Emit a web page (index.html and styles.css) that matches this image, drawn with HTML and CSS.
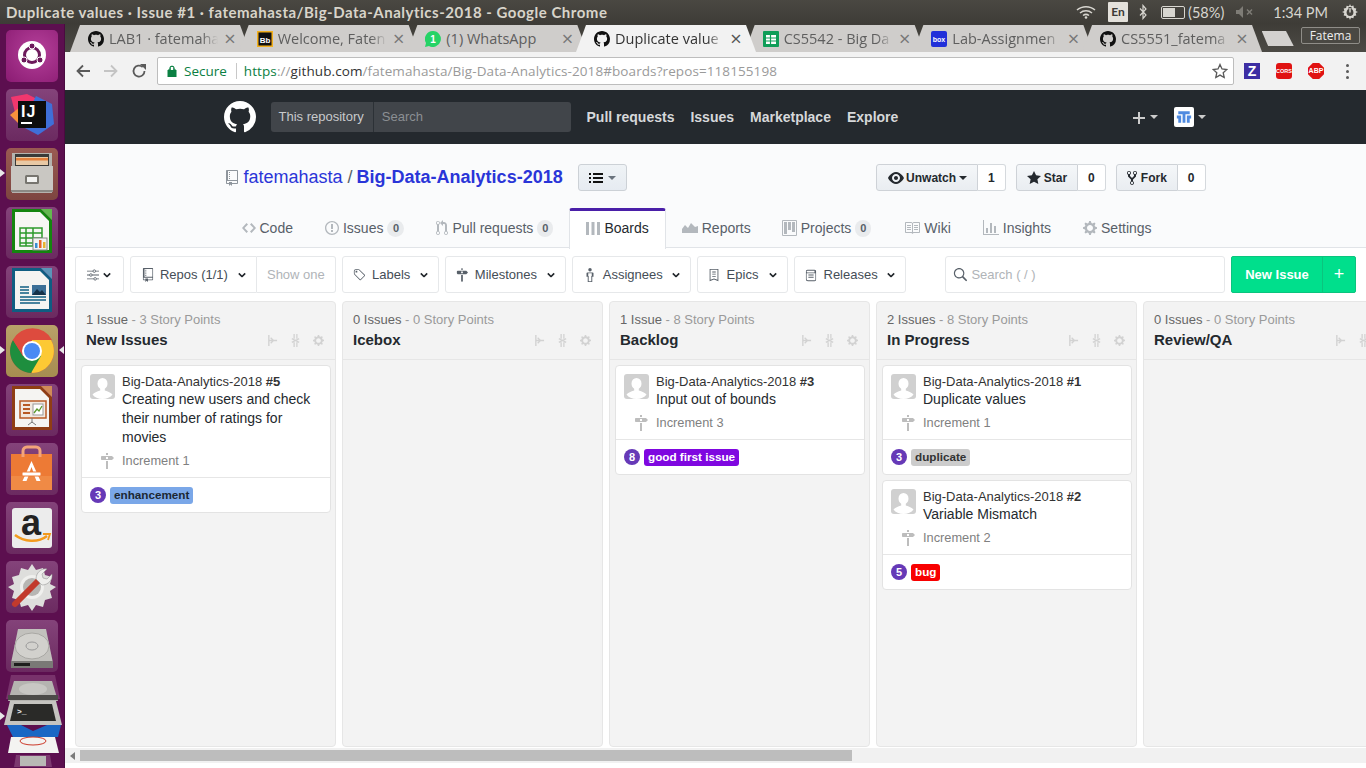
FILE: index.html
```html
<!DOCTYPE html>
<html lang="en">
<head>
<meta charset="utf-8">
<title>Duplicate values</title>
<link rel="stylesheet" href="styles.css">
</head>
<body>
<svg class="defs" width="0" height="0">
  <symbol id="i-mark" viewBox="0 0 16 16"><path d="M8 0C3.58 0 0 3.58 0 8c0 3.54 2.29 6.53 5.47 7.59.4.07.55-.17.55-.38 0-.19-.01-.82-.01-1.49-2.01.37-2.53-.49-2.69-.94-.09-.23-.48-.94-.82-1.13-.28-.15-.68-.52-.01-.53.63-.01 1.08.58 1.23.82.72 1.21 1.87.87 2.33.66.07-.52.28-.87.51-1.07-1.78-.2-3.64-.89-3.64-3.95 0-.87.31-1.59.82-2.15-.08-.2-.36-1.02.08-2.12 0 0 .67-.21 2.2.82.64-.18 1.32-.27 2-.27.68 0 1.36.09 2 .27 1.53-1.04 2.2-.82 2.2-.82.44 1.1.16 1.92.08 2.12.51.56.82 1.27.82 2.15 0 3.07-1.87 3.75-3.65 3.95.29.25.54.73.54 1.48 0 1.07-.01 1.93-.01 2.2 0 .21.15.46.55.38A8.013 8.013 0 0 0 16 8c0-4.42-3.58-8-8-8z"/></symbol>
  <symbol id="i-eye" viewBox="0 0 16 16"><path d="M8.06 2C3 2 0 8 0 8s3 6 8.06 6C13 14 16 8 16 8s-3-6-7.94-6zM8 12c-2.2 0-4-1.78-4-4 0-2.2 1.8-4 4-4 2.22 0 4 1.8 4 4 0 2.22-1.78 4-4 4zm2-4c0 1.11-.89 2-2 2-1.11 0-2-.89-2-2 0-1.11.89-2 2-2 1.11 0 2 .89 2 2z"/></symbol>
  <symbol id="i-star" viewBox="0 0 14 16"><path d="M14 6l-4.9-.64L7 1 4.9 5.36 0 6l3.6 3.26L2.67 14 7 11.67 11.33 14l-.93-4.74L14 6z"/></symbol>
  <symbol id="i-fork" viewBox="0 0 10 16"><path d="M8 1a1.993 1.993 0 0 0-1 3.72V6L5 8 3 6V4.72A1.993 1.993 0 0 0 2 1a1.993 1.993 0 0 0-1 3.72V6.5l3 3v1.78A1.993 1.993 0 0 0 5 15a1.993 1.993 0 0 0 1-3.72V9.5l3-3V4.72A1.993 1.993 0 0 0 8 1zM2 4.2C1.34 4.2.8 3.65.8 3c0-.65.55-1.2 1.2-1.2.65 0 1.2.55 1.2 1.2 0 .65-.55 1.2-1.2 1.2zm3 10c-.66 0-1.2-.55-1.2-1.2 0-.65.55-1.2 1.2-1.2.65 0 1.2.55 1.2 1.2 0 .65-.55 1.2-1.2 1.2zm3-10c-.66 0-1.2-.55-1.2-1.2 0-.65.55-1.2 1.2-1.2.65 0 1.2.55 1.2 1.2 0 .65-.55 1.2-1.2 1.2z"/></symbol>
  <symbol id="i-repo" viewBox="0 0 12 16"><path d="M4 9H3V8h1v1zm0-3H3v1h1V6zm0-2H3v1h1V4zm0-2H3v1h1V2zm8-1v12c0 .55-.45 1-1 1H6v2l-1.5-1.5L3 16v-2H1c-.55 0-1-.45-1-1V1c0-.55.45-1 1-1h10c.55 0 1 .45 1 1zm-1 10H1v2h2v-1h3v1h5v-2zm0-10H2v9h9V1z"/></symbol>
  <symbol id="i-code" viewBox="0 0 14 16"><path d="M9.5 3L8 4.5 11.5 8 8 11.5 9.5 13 14 8 9.5 3zm-5 0L0 8l4.5 5L6 11.5 2.5 8 6 4.5 4.5 3z"/></symbol>
  <symbol id="i-issue" viewBox="0 0 14 16"><path d="M7 2.3c3.14 0 5.7 2.56 5.7 5.7s-2.56 5.7-5.7 5.7A5.71 5.71 0 0 1 1.3 8c0-3.14 2.56-5.7 5.7-5.7zM7 1C3.14 1 0 4.14 0 8s3.14 7 7 7 7-3.14 7-7-3.14-7-7-7zm1 3H6v5h2V4zm0 6H6v2h2v-2z"/></symbol>
  <symbol id="i-pr" viewBox="0 0 12 16"><path d="M11 11.28V5c-.03-.78-.34-1.47-.94-2.06C9.46 2.35 8.78 2.03 8 2H7V0L4 3l3 3V4h1c.27.02.48.11.69.31.21.2.3.42.31.69v6.28A1.993 1.993 0 0 0 10 15a1.993 1.993 0 0 0 1-3.72zm-1 2.92c-.66 0-1.2-.55-1.2-1.2 0-.65.55-1.2 1.2-1.2.65 0 1.2.55 1.2 1.2 0 .65-.55 1.2-1.2 1.2zM4 3c0-1.11-.89-2-2-2a1.993 1.993 0 0 0-1 3.72v6.56A1.993 1.993 0 0 0 2 15a1.993 1.993 0 0 0 1-3.72V4.72c.59-.34 1-.98 1-1.72zm-.8 10c0 .66-.55 1.2-1.2 1.2-.65 0-1.2-.55-1.2-1.2 0-.65.55-1.2 1.2-1.2.65 0 1.2.55 1.2 1.2zM2 4.2C1.34 4.2.8 3.65.8 3c0-.65.55-1.2 1.2-1.2.65 0 1.2.55 1.2 1.2 0 .65-.55 1.2-1.2 1.2z"/></symbol>
  <symbol id="i-boards" viewBox="0 0 14 16"><path d="M0 2h3v13H0zM5.5 2h3v13h-3zM11 2h3v13h-3z"/></symbol>
  <symbol id="i-reports" viewBox="0 0 16 16"><path d="M0 13V9l3-4 3 3 3-5 4 4 3-1v7z"/></symbol>
  <symbol id="i-project" viewBox="0 0 15 16"><path fill-rule="evenodd" d="M10 12h3V2h-3v10zm-4-2h3V2H6v8zm-4 4h3V2H2v12zm-1 1h13V1H1v14zM14 0H1a1 1 0 0 0-1 1v14a1 1 0 0 0 1 1h13a1 1 0 0 0 1-1V1a1 1 0 0 0-1-1z"/></symbol>
  <symbol id="i-book" viewBox="0 0 16 16"><path d="M3 5h4v1H3V5zm0 3h4V7H3v1zm0 2h4V9H3v1zm11-5h-4v1h4V5zm0 2h-4v1h4V7zm0 2h-4v1h4V9zm2-6v9c0 .55-.45 1-1 1H9.5l-1 1-1-1H2c-.55 0-1-.45-1-1V3c0-.55.45-1 1-1h5.5l1 1 1-1H15c.55 0 1 .45 1 1zm-8 .5L7.5 3H2v9h6V3.5zm7-.5H9.5l-.5.5V12h6V3z"/></symbol>
  <symbol id="i-graph" viewBox="0 0 16 16"><path d="M16 14v1H0V0h1v14h15zM5 13H3V8h2v5zm4 0H7V3h2v10zm4 0h-2V6h2v7z"/></symbol>
  <symbol id="i-gear" viewBox="0 0 14 16"><path d="M14 8.77v-1.6l-1.94-.64-.45-1.09.88-1.84-1.13-1.13-1.81.91-1.09-.45-.69-1.92h-1.6l-.63 1.94-1.11.45-1.84-.88-1.13 1.13.91 1.81-.45 1.09L0 7.23v1.59l1.94.64.45 1.09-.88 1.84 1.13 1.13 1.81-.91 1.09.45.69 1.92h1.59l.63-1.94 1.11-.45 1.84.88 1.13-1.13-.92-1.81.47-1.09L14 8.75v.02zM7 11c-1.66 0-3-1.34-3-3s1.34-3 3-3 3 1.34 3 3-1.34 3-3 3z"/></symbol>
  <symbol id="i-tag" viewBox="0 0 14 16"><path d="M7.73 1.73C7.26 1.26 6.62 1 5.96 1H3.5C2.13 1 1 2.13 1 3.5v2.47c0 .66.27 1.3.73 1.77l6.06 6.06c.39.39 1.02.39 1.41 0l4.59-4.59a.996.996 0 0 0 0-1.41L7.73 1.73zM2.38 7.09c-.31-.3-.47-.7-.47-1.13V3.5c0-.88.72-1.59 1.59-1.59h2.47c.42 0 .83.16 1.13.47l6.14 6.13-4.73 4.73-6.13-6.15zM3.01 3h2v2H3V3h.01z"/></symbol>
  <symbol id="i-milestone" viewBox="0 0 14 16"><path d="M8 2H6V0h2v2zm4 5H2c-.55 0-1-.45-1-1V4c0-.55.45-1 1-1h10l2 2-2 2zM8 4H6v2h2V4zM6 16h2V8H6v8z"/></symbol>
  <symbol id="i-search" viewBox="0 0 16 16"><path d="M15.7 13.3l-3.81-3.83A5.93 5.93 0 0 0 13 6c0-3.31-2.69-6-6-6S1 2.69 1 6s2.69 6 6 6c1.3 0 2.48-.41 3.47-1.11l3.83 3.81c.19.2.45.3.7.3.25 0 .52-.09.7-.3a.996.996 0 0 0 0-1.41v.01zM7 10.7c-2.59 0-4.7-2.11-4.7-4.7 0-2.59 2.11-4.7 4.7-4.7 2.59 0 4.7 2.11 4.7 4.7 0 2.59-2.11 4.7-4.7 4.7z"/></symbol>
  <symbol id="i-sliders" viewBox="0 0 14 14"><path d="M0 2h7v1H0zM10 2h4v1h-4zM0 6.5h3v1H0zM6 6.5h8v1H6zM0 11h8v1H0zM11 11h3v1h-3z"/><path d="M8.5 1a1.5 1.5 0 1 0 0 3 1.5 1.5 0 0 0 0-3zM4.5 5.5a1.5 1.5 0 1 0 0 3 1.5 1.5 0 0 0 0-3zM9.5 10a1.5 1.5 0 1 0 0 3 1.5 1.5 0 0 0 0-3z" fill="none" stroke="currentColor"/></symbol>
  <symbol id="i-person" viewBox="0 0 10 16"><path d="M5 0a2 2 0 1 1 0 4 2 2 0 0 1 0-4zM2 5h6a1 1 0 0 1 1 1v4H7.6v6H2.4v-6H1V6a1 1 0 0 1 1-1zm1 1.1V9h.5v6h3V9H7V6.1z"/></symbol>
  <symbol id="i-epic" viewBox="0 0 12 16"><path d="M1 1h10v14l-5-2-5 2zM2 2v11.5l4-1.6 4 1.6V2zM4 4h4v1H4zM4 6.5h4v1H4zM4 9h4v1H4z"/></symbol>
  <symbol id="i-release" viewBox="0 0 12 16"><path fill-rule="evenodd" d="M2 2h8a2 2 0 0 1 2 2v9a2 2 0 0 1-2 2H2.5A2.5 2.5 0 0 1 0 12.5V4a2 2 0 0 1 2-2zm0 1a1 1 0 0 0 0 2h8V3zm-1 3v6.500A1.500 1.500 0 0 0 2.500 14H10a1 1 0 0 0 1-1V6zm2 1.500h6v1H3zm0 2.500h6v1H3z"/></symbol>
  <symbol id="i-chev" viewBox="0 0 10 6"><path d="M1 1l4 4 4-4" fill="none" stroke="currentColor" stroke-width="2"/></symbol>
  <symbol id="i-pin" viewBox="0 0 12 14"><path d="M2 1v12M2 7h9M4 4l3 3-3 3" fill="none" stroke="currentColor" stroke-width="1.500"/></symbol>
  <symbol id="i-squash" viewBox="0 0 12 14"><path d="M4.500 0v5M7.500 0v5M4.500 9v5M7.500 9v5M2 5l4 2 4-2M2 9l4-2 4 2" fill="none" stroke="currentColor" stroke-width="1.400"/></symbol>
  <symbol id="i-avatar" viewBox="0 0 25 25"><path d="M7.500 9.500a5 5.500 0 1 1 10 0c0 2.400-1.100 4.300-2.700 5.200v1.700c3.300.9 6.100 2.300 7.700 4.100-2 2.800-5.700 4.500-10 4.500s-8-1.700-10-4.500c1.600-1.800 4.400-3.200 7.700-4.100v-1.700c-1.600-.9-2.700-2.800-2.700-5.200z"/></symbol>
</svg>

<header class="os-bar">
  <div class="os-title">Duplicate values · Issue #1 · fatemahasta/Big-Data-Analytics-2018 - Google Chrome</div>
  <div class="os-tray">
    <svg class="tray-wifi" viewBox="0 0 20 14"><path d="M1 5c5-4.500 13-4.500 18 0M4 8c3.500-3 8.500-3 12 0M7 10.500c2-1.500 4-1.500 6 0" fill="none" stroke="#d8d6d0" stroke-width="1.500"/><circle cx="10" cy="12.500" r="1.300" fill="#d8d6d0"/></svg>
    <span class="tray-lang">En</span>
    <svg class="tray-bt" viewBox="0 0 8 16"><path d="M1 4.500l6 6.500-3 3.500V1.500l3 3.500-6 6.500" fill="none" stroke="#d8d6d0" stroke-width="1.200"/></svg>
    <span class="tray-batt"><span class="tray-level"></span></span>
    <span class="tray-pct">(58%)</span>
    <svg class="tray-vol" viewBox="0 0 20 12"><path d="M0 4h3l4-4v12l-4-4H0z" fill="#7e7c76"/><path d="M11 3.500l5 5M16 3.500l-5 5" stroke="#7e7c76" stroke-width="1.500"/></svg>
    <span class="tray-time">1:34 PM</span>
    <svg class="tray-power" viewBox="0 0 16 16"><path d="M8 0l1 2.200 2.400-.6.500 2.400 2.400.5-.6 2.400L16 8l-2.300 1 .6 2.400-2.400.5-.5 2.400-2.400-.6L8 16l-1-2.300-2.400.6-.5-2.400-2.400-.5.6-2.400L0 8l2.300-1-.6-2.400 2.400-.5.5-2.400 2.400.6z" fill="#d8d6d0"/><circle cx="8" cy="8.500" r="3.400" fill="#45433e"/><path d="M8 3v5.500" stroke="#45433e" stroke-width="3"/><path d="M8 4v4.500" stroke="#d8d6d0" stroke-width="1.400"/></svg>
  </div>
</header>

<div class="desktop">
  <nav class="launcher">
    <div class="tile tile-magenta"><svg viewBox="0 0 52 52"><circle cx="26" cy="25" r="14" fill="#fff"/><circle cx="26" cy="25" r="7.500" fill="none" stroke="#6d1a5c" stroke-width="3"/><circle cx="26" cy="16" r="3" fill="#6d1a5c" stroke="#fff"/><circle cx="18" cy="30" r="3" fill="#6d1a5c" stroke="#fff"/><circle cx="34" cy="30" r="3" fill="#6d1a5c" stroke="#fff"/></svg></div>
    <div class="tile"><svg viewBox="0 0 52 52"><path d="M5 8l16-3 12 6-8 22-14-2z" fill="#f0376e"/><path d="M30 7l16 8 2 20-16 11-17-9z" fill="#3f6fd8"/><path d="M4 26l10-8v18z" fill="#f7923c"/><rect x="12" y="12" width="28" height="27" fill="#0d0d0d"/><text x="15" y="28" class="ij">IJ</text><rect x="15" y="33" width="11" height="2" fill="#fff"/></svg></div>
    <div class="tile tile-brown"><svg viewBox="0 0 52 52"><path d="M6 5h40v40H6z" fill="#b5b3ae"/><rect x="9" y="6" width="34" height="13" fill="#3a3a38"/><rect x="10" y="9" width="32" height="8" fill="#e8c9a5"/><rect x="10" y="10" width="32" height="2.500" fill="#e3803c"/><path d="M5 18h42v26H5z" fill="#c9c7c2"/><path d="M5 42h42v2H5z" fill="#8b8984"/><rect x="19" y="27" width="14" height="9" rx="1.500" fill="#77756f"/><rect x="21" y="29" width="10" height="5" fill="#f2f2f0"/></svg></div>
    <div class="tile"><svg viewBox="0 0 52 52"><path d="M6 2h29l11 11v33H6z" fill="#14850f"/><path d="M9 5h25l9 9v29H9z" fill="#f6f6f4"/><path d="M35 2h11v11z" fill="#63b84f"/><g fill="none" stroke="#2c9a2b" stroke-width="1.500"><path d="M14 21h22v18H14zM14 26h22M14 31h22M14 36h22M20 21v18M27 21v18"/></g><rect x="27" y="31" width="14" height="12" fill="#f3f3f1" stroke="#888"/><rect x="29" y="36" width="2.500" height="5" fill="#3a8dd0"/><rect x="33" y="33" width="2.500" height="8" fill="#e8632a"/><rect x="37" y="35" width="2.500" height="6" fill="#eab430"/></svg></div>
    <div class="tile"><svg viewBox="0 0 52 52"><path d="M6 2h29l11 11v33H6z" fill="#0f5d82"/><path d="M9 5h25l9 9v29H9z" fill="#f4f4f2"/><path d="M35 2h11v11z" fill="#5b94b8"/><rect x="26" y="19" width="14" height="10" fill="#3b6f97"/><path d="M26 29l5-6 3 3 2-2 4 5z" fill="#15324a"/><path d="M14 21h9M14 24h9M14 27h9M14 31h26M14 34h26M14 37h20" stroke="#0f5d82" stroke-width="1.600"/></svg></div>
    <div class="tile tile-gold"><svg viewBox="0 0 52 52"><circle cx="26" cy="26" r="22" fill="#dd4b3e"/><path d="M26 48a22 22 0 0 0 19-33H26l-9 16z" fill="#fcc934"/><path d="M7 15a22 22 0 0 0 18 33l10-17-9-5-9 5z" fill="#1e8e3e"/><path d="M26 15h20a22 22 0 0 0-39 0l10 16z" fill="#dd4b3e"/><circle cx="26" cy="26" r="10" fill="#fff"/><circle cx="26" cy="26" r="8" fill="#4a8af4"/></svg></div>
    <div class="tile"><svg viewBox="0 0 52 52"><path d="M6 2h29l11 11v33H6z" fill="#8f3d14"/><path d="M9 5h25l9 9v29H9z" fill="#f5f4f2"/><path d="M35 2h11v11z" fill="#d08b58"/><rect x="14" y="17" width="26" height="17" fill="#f2e9e0" stroke="#b85a24" stroke-width="1.500"/><path d="M17 21h7M17 25h7M17 29h7" stroke="#b85a24" stroke-width="2"/><rect x="27" y="20" width="10" height="11" fill="#fff" stroke="#999"/><path d="M28 29l3-4 2 2 3-5" fill="none" stroke="#5a9a2d" stroke-width="1.300"/><path d="M26 34v5M22 41l4-3 4 3" stroke="#777" fill="none"/></svg></div>
    <div class="tile"><svg viewBox="0 0 52 52"><path d="M5 11h41v36H5z" fill="#ed7a35"/><path d="M5 33h41v14H5z" fill="#f08a45"/><path d="M17 14V8a4 4 0 0 1 4-4h9a4 4 0 0 1 4 4v6" fill="none" stroke="#f3a47a" stroke-width="3"/><path d="M25.500 18l-9 20h4l2-5h6l2 5h4zm-1.800 11l1.800-5 1.800 5z" fill="#fff"/><rect x="16" y="29" width="19" height="4" rx="1" fill="#fff" stroke="#ed7a35"/></svg></div>
    <div class="tile"><svg viewBox="0 0 52 52"><rect x="6" y="6" width="40" height="40" rx="3" fill="#ececec"/><text x="25" y="33" class="amz">a</text><path d="M9 33c9 7 23 8 32 1" fill="none" stroke="#f39a1d" stroke-width="2.500"/><path d="M37 32l7 0-2 6" fill="none" stroke="#f39a1d" stroke-width="1.800"/></svg></div>
    <div class="tile"><svg viewBox="0 0 52 52"><path d="M26 3l4 6 7-2 2 7 7 2-2 7 6 3-6 4 2 7-7 2-2 7-7-2-4 6-4-6-7 2-2-7-7-2 2-7-6-4 6-3-2-7 7-2 2-7 7 2z" fill="#dededc"/><circle cx="26" cy="26" r="12" fill="#f0f0ee"/><circle cx="26" cy="26" r="9" fill="#b7b6b3"/><path d="M9 43L32 20" stroke="#c23a2c" stroke-width="6" stroke-linecap="round"/><path d="M30 18c0-6 5-11 11-10l-5 5 1 4 4 1 5-5c1 6-4 11-10 11z" fill="#eeeeec" stroke="#888" stroke-width=".5"/></svg></div>
    <div class="tile"><svg viewBox="0 0 52 52"><path d="M12 9h28l7 34H5z" fill="#c2c1bd"/><ellipse cx="26" cy="26" rx="17" ry="13" fill="#d2d1cd" stroke="#a9a8a4"/><ellipse cx="26" cy="26" rx="6" ry="4" fill="none" stroke="#999"/><path d="M5 41h42v7H5z" fill="#7a7976"/><path d="M8 43h16v3H8z" fill="#1e1e1d"/></svg></div>
    <div class="tile-stack">
      <svg viewBox="0 0 62 94">
        <path d="M9 0h44l5 24H4z" fill="#8a4a7e" opacity=".6"/>
        <path d="M12 6h38l6 20H6z" fill="#b5b4b0"/>
        <ellipse cx="31" cy="14" rx="14" ry="6" fill="#c8c7c3"/>
        <path d="M6 20h50v5H6z" fill="#4c4b48"/>
        <path d="M8 26h46l6 24H2z" fill="#c5c4c0"/>
        <path d="M12 29h38l4 17H8z" fill="#2a2a28"/>
        <text x="15" y="39" class="term">&gt;_</text>
        <path d="M5 50h14l12 6 14-6h14l-3 12H11z" fill="#1a67c4"/>
        <path d="M9 62h44l4 16H6z" fill="#f3f3f1"/>
        <ellipse cx="31" cy="66" rx="13" ry="4" fill="none" stroke="#cc3a2a"/>
        <path d="M14 80h34l2 12H12z" fill="#8a4a7e" opacity=".7"/>
        <path d="M18 81h26v10H18z" fill="#b9b9b5"/>
      </svg>
    </div>
    <i class="pip pip-files"></i>
    <i class="pip pip-chrome"></i>
    <i class="pip-right"></i>
    <i class="pip pip-term"></i>
  </nav>

  <div class="window">
    <div class="tabstrip">
      <div class="tab"><svg class="fav fav-dark" viewBox="0 0 16 16"><use href="#i-mark"/></svg><span class="tab-text">LAB1 · fatemaha</span><span class="tab-x">×</span></div>
      <div class="tab"><svg class="fav" viewBox="0 0 16 16"><rect width="16" height="16" fill="#f2b01e"/><rect x="1.500" y="1.500" width="13" height="13" fill="#111"/><text x="8" y="11.500" class="bb">Bb</text></svg><span class="tab-text">Welcome, Faten</span><span class="tab-x">×</span></div>
      <div class="tab"><svg class="fav" viewBox="0 0 16 16"><path d="M8 0a8 8 0 1 1-4 15L0 16l1-4A8 8 0 0 1 8 0z" fill="#25d366"/><text x="8" y="12" class="wa">1</text></svg><span class="tab-text tab-plain">(1) WhatsApp</span><span class="tab-x">×</span></div>
      <div class="tab tab-active"><svg class="fav fav-dark" viewBox="0 0 16 16"><use href="#i-mark"/></svg><span class="tab-text">Duplicate value</span><span class="tab-x">×</span></div>
      <div class="tab"><svg class="fav" viewBox="0 0 16 16"><path d="M1 0h14a1 1 0 0 1 1 1v14a1 1 0 0 1-1 1H1a1 1 0 0 1-1-1V1a1 1 0 0 1 1-1z" fill="#0f9d58"/><path d="M3 4h10v9H3z" fill="#fff"/><path d="M3 7h10M3 10h10M7.500 4v9" stroke="#0f9d58" stroke-width="1.200"/></svg><span class="tab-text">CS5542 - Big Da</span><span class="tab-x">×</span></div>
      <div class="tab"><svg class="fav" viewBox="0 0 16 16"><rect width="16" height="16" rx="2" fill="#2130d9"/><text x="8" y="10.500" class="box">box</text></svg><span class="tab-text">Lab-Assignmen</span><span class="tab-x">×</span></div>
      <div class="tab"><svg class="fav fav-dark" viewBox="0 0 16 16"><use href="#i-mark"/></svg><span class="tab-text">CS5551_fatema</span><span class="tab-x">×</span></div>
      <div class="newtab"></div>
      <div class="profile">Fatema</div>
    </div>

    <div class="toolbar">
      <svg class="tb-ic" viewBox="0 0 16 16"><path d="M15 8H3M8 2.500L2.500 8 8 13.500" fill="none" stroke="#5a5a5a" stroke-width="1.800"/></svg>
      <svg class="tb-ic" viewBox="0 0 16 16"><path d="M1 8h12M8 2.500L13.500 8 8 13.500" fill="none" stroke="#c4c4c4" stroke-width="1.800"/></svg>
      <svg class="tb-ic" viewBox="0 0 16 16"><path d="M13.500 8A5.500 5.500 0 1 1 11.700 4" fill="none" stroke="#5a5a5a" stroke-width="1.800"/><path d="M9 1h6v6z" fill="#5a5a5a"/></svg>
      <div class="omnibox">
        <svg class="lock" viewBox="0 0 10 12"><path d="M1 5h8v7H1zM2.800 5V3.300a2.200 2.200 0 0 1 4.400 0V5" fill="#0b8043" stroke="#0b8043"/><rect x="3.800" y="2" width="2.400" height="3" fill="#fff"/></svg>
        <span class="secure">Secure</span>
        <span class="sep"></span>
        <span class="url"><span class="u-green">https</span>://<span class="u-dark">github.com</span>/fatemahasta/Big-Data-Analytics-2018#boards?repos=118155198</span>
        <svg class="omni-star" viewBox="0 0 16 16"><path d="M8 1.500l2 4.500 4.800.5-3.600 3.200 1 4.800L8 12.100l-4.200 2.400 1-4.800L1.200 6.500 6 6z" fill="none" stroke="#5a5a5a" stroke-width="1.300"/></svg>
      </div>
      <div class="exts">
        <span class="ext ext-z">Z</span>
        <span class="ext ext-cors">CORS</span>
        <span class="ext ext-abp">ABP</span>
        <span class="ext-dots"><i></i><i></i><i></i></span>
      </div>
    </div>

    <div class="page">
      <div class="gh-head">
        <div class="container head-row">
          <svg class="gh-mark" viewBox="0 0 16 16"><use href="#i-mark"/></svg>
          <div class="gh-search"><span class="gh-scope">This repository</span><span class="gh-input">Search</span></div>
          <a class="gh-link">Pull requests</a>
          <a class="gh-link">Issues</a>
          <a class="gh-link">Marketplace</a>
          <a class="gh-link">Explore</a>
          <div class="gh-right">
            <svg class="gh-plus" viewBox="0 0 12 12"><path d="M5 0h2v5h5v2H7v5H5V7H0V5h5z"/></svg><i class="caret caret-light"></i>
            <svg class="identicon" viewBox="0 0 7 7"><rect width="7" height="7" fill="#fff"/><path d="M1.500 1.500h4v1h-4zM1 3h1.500v1H1zM3 2.500h1V5.500H3zM4.500 3H6v1H4.500zM1.500 4h1v1.500h-1zM4.500 4h1v1.500h-1z" fill="#4f8ae0"/></svg><i class="caret caret-light"></i>
          </div>
        </div>
      </div>

      <div class="repo-head">
        <div class="container repo-row">
          <svg class="repo-ic" viewBox="0 0 12 16"><use href="#i-repo"/></svg>
          <h1 class="repo-name"><a class="owner">fatemahasta</a> <span class="slash">/</span> <a class="rname">Big-Data-Analytics-2018</a></h1>
          <button class="menu-btn"><svg class="list-ic" viewBox="0 0 14 12"><path d="M0 1h2v2H0zM4 1h10v2H4zM0 5h2v2H0zM4 5h10v2H4zM0 9h2v2H0zM4 9h10v2H4z"/></svg><i class="caret caret-grey"></i></button>
          <div class="actions">
            <div class="act"><span class="act-btn act-watch"><svg class="act-eye" viewBox="0 0 16 16"><use href="#i-eye"/></svg>Unwatch<i class="caret caret-dark"></i></span><span class="act-n">1</span></div>
            <div class="act"><span class="act-btn"><svg class="act-star" viewBox="0 0 14 16"><use href="#i-star"/></svg>Star</span><span class="act-n">0</span></div>
            <div class="act"><span class="act-btn"><svg class="act-fork" viewBox="0 0 10 16"><use href="#i-fork"/></svg>Fork</span><span class="act-n">0</span></div>
          </div>
        </div>
        <div class="container nav-row">
          <a class="nav"><svg class="nav-ic w14" viewBox="0 0 14 16"><use href="#i-code"/></svg>Code</a>
          <a class="nav nav-issues"><svg class="nav-ic w14" viewBox="0 0 14 16"><use href="#i-issue"/></svg>Issues<span class="count">0</span></a>
          <a class="nav"><svg class="nav-ic w12" viewBox="0 0 12 16"><use href="#i-pr"/></svg>Pull requests<span class="count">0</span></a>
          <a class="nav nav-active"><svg class="nav-ic w14" viewBox="0 0 14 16"><use href="#i-boards"/></svg>Boards</a>
          <a class="nav nav-reports"><svg class="nav-ic w16" viewBox="0 0 16 16"><use href="#i-reports"/></svg>Reports</a>
          <a class="nav"><svg class="nav-ic w15" viewBox="0 0 15 16"><use href="#i-project"/></svg>Projects<span class="count">0</span></a>
          <a class="nav nav-wiki"><svg class="nav-ic w16" viewBox="0 0 16 16"><use href="#i-book"/></svg>Wiki</a>
          <a class="nav"><svg class="nav-ic w16" viewBox="0 0 16 16"><use href="#i-graph"/></svg>Insights</a>
          <a class="nav"><svg class="nav-ic w14" viewBox="0 0 14 16"><use href="#i-gear"/></svg>Settings</a>
        </div>
      </div>

      <div class="filters">
        <div class="fbtn f-set"><svg class="f-ic" viewBox="0 0 14 14"><use href="#i-sliders"/></svg><svg class="chev" viewBox="0 0 10 6"><use href="#i-chev"/></svg></div>
        <div class="fgroup">
          <div class="fbtn f-repos"><svg class="f-ic" viewBox="0 0 12 16"><use href="#i-repo"/></svg>Repos (1/1)<svg class="chev" viewBox="0 0 10 6"><use href="#i-chev"/></svg></div>
          <div class="fbtn f-show">Show one</div>
        </div>
        <div class="fbtn f-labels"><svg class="f-ic" viewBox="0 0 14 16"><use href="#i-tag"/></svg>Labels<svg class="chev" viewBox="0 0 10 6"><use href="#i-chev"/></svg></div>
        <div class="fbtn f-miles"><svg class="f-ic" viewBox="0 0 14 16"><use href="#i-milestone"/></svg>Milestones<svg class="chev" viewBox="0 0 10 6"><use href="#i-chev"/></svg></div>
        <div class="fbtn f-assign"><svg class="f-ic" viewBox="0 0 10 16"><use href="#i-person"/></svg>Assignees<svg class="chev" viewBox="0 0 10 6"><use href="#i-chev"/></svg></div>
        <div class="fbtn f-epics"><svg class="f-ic" viewBox="0 0 12 16"><use href="#i-epic"/></svg>Epics<svg class="chev" viewBox="0 0 10 6"><use href="#i-chev"/></svg></div>
        <div class="fbtn f-rel"><svg class="f-ic" viewBox="0 0 12 16"><use href="#i-release"/></svg>Releases<svg class="chev" viewBox="0 0 10 6"><use href="#i-chev"/></svg></div>
        <div class="fsearch"><svg class="s-ic" viewBox="0 0 16 16"><use href="#i-search"/></svg>Search ( / )</div>
        <div class="new-issue"><span class="ni-main">New Issue</span><span class="ni-plus">+</span></div>
      </div>

      <div class="board">
        <section class="col">
          <div class="col-head"><p class="col-meta"><b>1 Issue</b> - 3 Story Points</p><div class="col-title"><h2>New Issues</h2><span class="col-tools"><svg viewBox="0 0 12 14"><use href="#i-pin"/></svg><svg viewBox="0 0 12 14"><use href="#i-squash"/></svg><svg viewBox="0 0 14 16"><use href="#i-gear"/></svg></span></div></div>
          <div class="col-body">
            <article class="card">
              <div class="card-main"><svg class="avatar" viewBox="0 0 25 25"><use href="#i-avatar"/></svg><div class="card-text"><div class="card-repo">Big-Data-Analytics-2018 <b>#5</b></div><div class="card-title">Creating new users and check their number of ratings for movies</div></div></div>
              <div class="card-ms"><svg viewBox="0 0 14 16"><use href="#i-milestone"/></svg>Increment 1</div>
              <div class="card-foot"><span class="pts">3</span><span class="lbl lbl-enh">enhancement</span></div>
            </article>
          </div>
        </section>
        <section class="col">
          <div class="col-head"><p class="col-meta"><b>0 Issues</b> - 0 Story Points</p><div class="col-title"><h2>Icebox</h2><span class="col-tools"><svg viewBox="0 0 12 14"><use href="#i-pin"/></svg><svg viewBox="0 0 12 14"><use href="#i-squash"/></svg><svg viewBox="0 0 14 16"><use href="#i-gear"/></svg></span></div></div>
          <div class="col-body"></div>
        </section>
        <section class="col">
          <div class="col-head"><p class="col-meta"><b>1 Issue</b> - 8 Story Points</p><div class="col-title"><h2>Backlog</h2><span class="col-tools"><svg viewBox="0 0 12 14"><use href="#i-pin"/></svg><svg viewBox="0 0 12 14"><use href="#i-squash"/></svg><svg viewBox="0 0 14 16"><use href="#i-gear"/></svg></span></div></div>
          <div class="col-body">
            <article class="card">
              <div class="card-main"><svg class="avatar" viewBox="0 0 25 25"><use href="#i-avatar"/></svg><div class="card-text"><div class="card-repo">Big-Data-Analytics-2018 <b>#3</b></div><div class="card-title">Input out of bounds</div></div></div>
              <div class="card-ms"><svg viewBox="0 0 14 16"><use href="#i-milestone"/></svg>Increment 3</div>
              <div class="card-foot"><span class="pts">8</span><span class="lbl lbl-gfi">good first issue</span></div>
            </article>
          </div>
        </section>
        <section class="col">
          <div class="col-head"><p class="col-meta"><b>2 Issues</b> - 8 Story Points</p><div class="col-title"><h2>In Progress</h2><span class="col-tools"><svg viewBox="0 0 12 14"><use href="#i-pin"/></svg><svg viewBox="0 0 12 14"><use href="#i-squash"/></svg><svg viewBox="0 0 14 16"><use href="#i-gear"/></svg></span></div></div>
          <div class="col-body">
            <article class="card">
              <div class="card-main"><svg class="avatar" viewBox="0 0 25 25"><use href="#i-avatar"/></svg><div class="card-text"><div class="card-repo">Big-Data-Analytics-2018 <b>#1</b></div><div class="card-title">Duplicate values</div></div></div>
              <div class="card-ms"><svg viewBox="0 0 14 16"><use href="#i-milestone"/></svg>Increment 1</div>
              <div class="card-foot"><span class="pts">3</span><span class="lbl lbl-dup">duplicate</span></div>
            </article>
            <article class="card">
              <div class="card-main"><svg class="avatar" viewBox="0 0 25 25"><use href="#i-avatar"/></svg><div class="card-text"><div class="card-repo">Big-Data-Analytics-2018 <b>#2</b></div><div class="card-title">Variable Mismatch</div></div></div>
              <div class="card-ms"><svg viewBox="0 0 14 16"><use href="#i-milestone"/></svg>Increment 2</div>
              <div class="card-foot"><span class="pts">5</span><span class="lbl lbl-bug">bug</span></div>
            </article>
          </div>
        </section>
        <section class="col">
          <div class="col-head"><p class="col-meta"><b>0 Issues</b> - 0 Story Points</p><div class="col-title"><h2>Review/QA</h2><span class="col-tools"><svg viewBox="0 0 12 14"><use href="#i-pin"/></svg><svg viewBox="0 0 12 14"><use href="#i-squash"/></svg><svg viewBox="0 0 14 16"><use href="#i-gear"/></svg></span></div></div>
          <div class="col-body"></div>
        </section>
      </div>

      <div class="hscroll"><i class="hs-arrow"></i><div class="hs-thumb"></div></div>
    </div>
  </div>
</div>
</body>
</html>
```

FILE: styles.css
```css
* { box-sizing: border-box; }
html, body { margin: 0; height: 100%; }
body {
  width: 1366px; height: 768px; overflow: hidden;
  display: flex; flex-direction: column;
  font-family: "Liberation Sans", Arial, sans-serif;
  background: #fff; color: #24292e;
}
.defs { position: absolute; }
a { color: inherit; text-decoration: none; }
h1, h2, p { margin: 0; }
svg { display: block; flex: none; fill: currentColor; }

/* OS bar */
.os-bar {
  height: 24px; flex: none; display: flex; align-items: center; justify-content: space-between;
  background: linear-gradient(#4a4842, #3e3c37);
  color: #dfdbd2; font-family: "Lato", sans-serif;
}
.os-title { padding-left: 6px; font-size: 15px; font-weight: 700; letter-spacing: .51px; color: #d8d4ca; white-space: nowrap; }
.os-tray { display: flex; align-items: center; height: 24px; font-size: 14.500px; color: #d8d6d0; }
.tray-wifi { width: 20px; height: 14px; margin-right: 12px; }
.tray-lang { width: 20px; height: 20px; background: #e4e1db; color: #3c3b37; font-size: 12px; font-weight: 700; text-align: center; line-height: 20px; margin-right: 11px; border-radius: 1px; }
.tray-bt { width: 8px; height: 16px; margin-right: 14px; }
.tray-batt { width: 24px; height: 13px; border: 1px solid #d8d6d0; border-radius: 2px; margin-right: 3px; padding: 1px; }
.tray-level { display: block; width: 58%; height: 100%; background: #d8d6d0; }
.tray-pct { margin-right: 12px; }
.tray-vol { width: 20px; height: 12px; margin-right: 17px; }
.tray-time { margin-right: 14px; }
.tray-power { width: 16px; height: 16px; margin-right: 8px; }

.desktop { flex: 1; display: flex; min-height: 0; }

/* Launcher */
.launcher {
  position: relative; width: 65px; flex: none; background: #5c0f4f;
  display: flex; flex-direction: column; gap: 7px; padding: 6px 0 0 6px;
  box-shadow: inset -1px 0 0 #4a0b40;
}
.tile {
  width: 52px; height: 52px; border-radius: 5px; flex: none;
  background: linear-gradient(#84437a, #6b2a60);
}
.tile svg { width: 52px; height: 52px; }
.tile-magenta { background: radial-gradient(circle at 60% 40%, #b5409a, #8a1b72); }
.tile-brown { background: linear-gradient(#9a5a52, #7d4540); }
.tile-gold { background: linear-gradient(#b9a169, #a68d50); }
.tile-stack { position: absolute; left: 2px; top: 651px; width: 62px; height: 94px; }
.tile-stack svg { width: 62px; height: 94px; }
.pip { position: absolute; left: 0; width: 0; height: 0; border: 4px solid transparent; border-left: 5px solid #e8e8e8; border-right: 0; }
.pip-files { top: 145px; }
.pip-chrome { top: 322px; }
.pip-term { top: 688px; }
.pip-right { position: absolute; right: 1px; top: 322px; width: 0; height: 0; border: 4px solid transparent; border-right: 5px solid #e8e8e8; border-left: 0; }
.ij { font: 700 16px "Liberation Sans", sans-serif; fill: #fff; letter-spacing: 1px; }
.amz { font: 700 36px "Liberation Sans", sans-serif; fill: #222; text-anchor: middle; }
.term { font: 700 8px "Liberation Mono", monospace; fill: #eee; }
.bb { font: 700 8px "Liberation Sans", sans-serif; fill: #fff; text-anchor: middle; }
.wa { font: 700 10px "Liberation Sans", sans-serif; fill: #fff; text-anchor: middle; }
.box { font: 700 7px "Liberation Sans", sans-serif; fill: #fff; text-anchor: middle; }

/* Window */
.window { flex: 1; min-width: 0; display: flex; flex-direction: column; }
.tabstrip {
  height: 28px; flex: none; display: flex; align-items: flex-end; position: relative;
  padding-left: 5px; background: linear-gradient(#3e3c37, #4c4a45);
}
.tab {
  width: 180px; height: 27px; margin-right: -11.330px; flex: none; display: flex; align-items: center;
  padding: 0 14px 0 18px; background: #cfcdcb; color: #5e5e5e;
  clip-path: polygon(10px 0, 170px 0, 180px 100%, 0 100%);
  font-family: "Open Sans", sans-serif; font-size: 14.500px; position: relative;
}
.tab-active { background: #f2f2f2; color: #333; z-index: 2; }
.fav { width: 16px; height: 16px; margin-right: 5px; }
.fav-dark { color: #111; }
.tab-text {
  flex: 1; min-width: 0; overflow: hidden; white-space: nowrap;
  -webkit-mask-image: linear-gradient(90deg, #000 85%, transparent);
  mask-image: linear-gradient(90deg, #000 85%, transparent);
}
.tab-plain { -webkit-mask-image: none; mask-image: none; }
.tab-x { width: 12px; margin-left: 6px; font-size: 20px; line-height: 16px; text-align: center; color: #777; }
.tab-active .tab-x { color: #555; }
.newtab {
  width: 32px; height: 15px; margin: 0 0 6px 11px; flex: none; background: #d3d1cf;
  clip-path: polygon(0 0, 76% 0, 100% 100%, 20% 100%);
}
.profile {
  position: absolute; right: 6px; top: 3px; width: 59px; height: 17px;
  border: 1px solid #8f8d88; border-radius: 2px; background: #4a4843;
  color: #eee; font-size: 12px; line-height: 15px; text-align: center; font-family: "Open Sans", sans-serif;
}
.toolbar {
  height: 38px; flex: none; display: flex; align-items: center; padding: 0 0 0 10px;
  background: #f2f2f2; gap: 12px;
}
.tb-ic { width: 16px; height: 16px; }
.omnibox {
  width: 1077px; height: 28px; margin-left: -2px; flex: none; display: flex; align-items: center;
  background: #fff; border: 1px solid #bdbdbd; border-radius: 2px; padding: 0 5px 0 9px;
}
.lock { width: 10px; height: 12px; }
.secure { margin-left: 7px; color: #0b8043; font: 13.500px "Open Sans", sans-serif; }
.sep { width: 1px; height: 16px; background: #c8c8c8; margin: 0 7px 0 9px; }
.url { flex: 1; font: 13.500px "Open Sans", sans-serif; color: #9a9a9a; white-space: nowrap; letter-spacing: .09px; }
.u-green { color: #0b8043; }
.u-dark { color: #333; }
.omni-star { width: 16px; height: 16px; }
.exts { display: flex; align-items: center; gap: 16px; margin-left: -2px; }
.ext { width: 16px; height: 16px; display: block; text-align: center; color: #fff; font-weight: 700; }
.ext-z { background: #3d2ea3; font-size: 14px; line-height: 16px; }
.ext-cors { background: #e01212; font-size: 5.500px; line-height: 16px; border-radius: 3px; }
.ext-abp { background: #e01212; font-size: 7px; line-height: 16px; clip-path: polygon(30% 0, 70% 0, 100% 30%, 100% 70%, 70% 100%, 30% 100%, 0 70%, 0 30%); }
.ext-dots { display: flex; flex-direction: column; gap: 3px; margin-left: 6px; }
.ext-dots i { width: 3px; height: 3px; background: #5a5a5a; border-radius: 50%; }

/* Page */
.page { flex: 1; min-height: 0; display: flex; flex-direction: column; background: #fff; }
.container { width: 980px; margin: 0 auto; }
.gh-head { height: 54px; flex: none; background: #24292e; }
.head-row { height: 100%; display: flex; align-items: center; }
.gh-mark { width: 32px; height: 32px; margin-left: -2px; margin-right: 15px; color: #fff; }
.gh-search { width: 300px; height: 30px; display: flex; background: #41454a; border-radius: 3px; font-size: 13px; line-height: 30px; margin-right: 16px; }
.gh-scope { padding: 0 9px 0 8px; color: #c8cacc; border-right: 1px solid #2c3136; }
.gh-input { padding-left: 8px; color: #8b8f93; }
.gh-link { color: #d6d8da; font-weight: 700; font-size: 14px; margin-right: 16px; }
.gh-right { margin-left: auto; display: flex; align-items: center; color: #ccc; }
.gh-plus { width: 12px; height: 12px; margin: 2px 5px 0 0; }
.identicon { width: 20px; height: 20px; margin: 0 4px 0 16px; border-radius: 2px; }
.caret { display: block; width: 0; height: 0; border: 4px solid transparent; border-top-color: currentColor; border-bottom: 0; flex: none; }
.caret-light { color: #ccc; }
.caret-grey { color: #6a737d; margin-left: 5px; }
.caret-dark { color: #24292e; margin-left: 3px; }

.repo-head { height: 104px; flex: none; background: #fafbfc; border-bottom: 1px solid #e1e4e8; }
.repo-row { display: flex; align-items: center; height: 27px; margin-top: 20px; position: relative; }
.repo-ic { width: 12px; height: 16px; color: #8e959c; margin-right: 6px; }
.repo-name { font-size: 18px; font-weight: 400; color: #2a35d8; white-space: nowrap; line-height: 27px; }
.slash { color: #586069; margin-right: -1px; }
.rname { font-weight: 700; }
.menu-btn {
  margin-left: 15px; width: 49px; height: 27px; display: flex; align-items: center; justify-content: center; padding: 0;
  background: linear-gradient(#eff3f6, #e6ebf1); border: 1px solid #ccd1d6; border-radius: 3px; color: #111;
}
.list-ic { width: 14px; height: 12px; }
.actions { margin-left: auto; display: flex; gap: 10px; }
.act { display: flex; height: 27px; font-size: 12px; font-weight: 700; }
.act-btn {
  display: flex; align-items: center; padding: 0 10px; background: linear-gradient(#f5f7f9, #e9edf1);
  border: 1px solid #ced2d7; border-radius: 3px 0 0 3px; color: #24292e;
}
.act-watch { padding-left: 11px; }
.act-n { display: flex; align-items: center; padding: 0 10px; background: #fff; border: 1px solid #d5d9dd; border-left: 0; border-radius: 0 3px 3px 0; }
.act-eye { width: 16px; height: 16px; margin-right: 2px; }
.act-star { width: 14px; height: 16px; margin-right: 3px; }
.act-fork { width: 10px; height: 16px; margin-right: 4px; }
.nav-row { display: flex; height: 40px; margin-top: 17px; position: relative; }
.nav {
  display: flex; align-items: center; height: 41px; padding: 0 16px 1px; font-size: 14px; color: #586069; white-space: nowrap;
}
.nav-reports { padding-right: 15px; }
.nav-wiki { padding-left: 17px; }
.nav-active {
  background: #fff; color: #24292e; border: 1px solid #e1e4e8; border-top: 3px solid #4a1fa8; border-bottom: 0; border-radius: 3px 3px 0 0;
  padding-bottom: 4px;
}
.nav-ic { height: 16px; margin-right: 4px; color: #b3b8bd; }
.w12 { width: 12px; } .w14 { width: 14px; } .w15 { width: 15px; } .w16 { width: 16px; }
.count { margin-left: 4px; width: 16px; height: 17px; padding: 0; border-radius: 9px; background: #e9ebed; font-size: 11px; font-weight: 700; line-height: 17px; text-align: center; color: #586069; }
.nav-issues .count { width: 17px; }

.filters { height: 53px; flex: none; display: flex; align-items: flex-start; padding: 8px 10px 0; gap: 6px; font-size: 13px; color: #444d56; }
.fbtn {
  height: 37px; display: flex; align-items: center; background: #fff; border: 1px solid #e6e8ea; border-radius: 3px; white-space: nowrap;
}
.f-ic { width: 12px; height: 14px; margin-right: 7px; color: #586069; }
.chev { width: 8px; height: 6px; margin-left: auto; color: #24292e; }
.f-set { width: 49px; padding: 0 12px 0 11px; }
.f-set .f-ic { width: 12px; margin-right: 0; }
.fgroup { display: flex; }
.f-repos { width: 127px; padding: 0 10px 0 11px; border-radius: 3px 0 0 3px; }
.f-repos .f-ic { margin-right: 6px; }
.f-show { width: 79px; padding-left: 10px; border-left: 0; border-radius: 0 3px 3px 0; color: #b0b4b8; }
.f-labels { width: 97px; padding: 0 10px 0 10px; }
.f-miles { width: 121px; padding: 0 10px 0 10px; }
.f-assign { width: 119px; padding: 0 10px 0 11px; }
.f-epics { width: 91px; padding: 0 10px 0 10px; }
.f-rel { width: 113px; padding: 0 10px 0 10px; }
.fsearch {
  width: 280px; height: 37px; margin-left: 33px; display: flex; align-items: center; padding-left: 7px;
  border: 1px solid #e6e8ea; border-radius: 3px; color: #b0b4b8;
}
.s-ic { width: 14px; height: 14px; margin-right: 4px; color: #586069; }
.new-issue { display: flex; height: 37px; font-weight: 700; color: #fff; background: #00df8c; border-radius: 2px; border: 1px solid #0bc47e; }
.ni-main { width: 90px; text-align: center; line-height: 35px; }
.ni-plus { width: 33px; text-align: center; line-height: 35px; font-size: 18px; font-weight: 400; border-left: 1px solid #0bc47e; }

.board { flex: 1; min-height: 0; display: flex; gap: 6px; padding-left: 10px; overflow: hidden; }
.col { width: 261px; flex: none; background: #f3f3f3; border: 1px solid #e6e6e6; border-radius: 4px; display: flex; flex-direction: column; }
.col-head { height: 58px; flex: none; padding: 10px 10px 0; border-bottom: 1px solid #e6e6e6; }
.col-meta { font-size: 13px; line-height: 16px; color: #9a9a9a; }
.col-meta b { font-weight: 400; color: #666; }
.col-title { display: flex; justify-content: space-between; align-items: center; margin-top: 1px; }
.col-title h2 { font-size: 15px; line-height: 22px; font-weight: 700; color: #24292e; }
.col-tools { display: flex; gap: 12px; align-items: center; padding-right: 1px; color: #d2d2d2; }
.col-tools svg { width: 11px; height: 13px; }
.col-body { padding: 5px 4px 0 5px; display: flex; flex-direction: column; gap: 5px; }
.card { background: #fff; border: 1px solid #e3e3e3; border-radius: 4px; }
.card-main { display: flex; padding: 8px 8px 0; gap: 7px; }
.avatar { width: 25px; height: 25px; color: #fff; background: #d0d0d0; border-radius: 3px; }
.card-repo { font-size: 13px; line-height: 16px; color: #333; white-space: nowrap; }
.card-title { font-size: 14px; line-height: 19px; color: #24292e; }
.card-ms { display: flex; align-items: center; height: 19px; margin-top: 4px; padding-left: 18px; font-size: 12.800px; color: #808080; }
.card-ms svg { width: 14px; height: 16px; color: #bdbdbd; margin-right: 8px; }
.card-foot { display: flex; align-items: center; gap: 4px; height: 35px; margin-top: 7px; padding-left: 8px; border-top: 1px solid #e6e6e6; }
.pts { width: 16px; height: 16px; border-radius: 50%; background: #6639b7; color: #fff; font-size: 11px; font-weight: 700; line-height: 16px; text-align: center; }
.lbl { height: 17px; padding: 0 4px; border-radius: 3px; font-size: 11.700px; font-weight: 700; line-height: 16px; white-space: nowrap; }
.lbl-enh { background: #7aa7e8; color: #1c2733; }
.lbl-gfi { background: #7f07e0; color: #fff; }
.lbl-dup { background: #cccccc; color: #333; }
.lbl-bug { background: #f80000; color: #fff; }

.hscroll { height: 15px; flex: none; margin-bottom: 5px; margin-top: 1px; background: #f1f1f1; display: flex; align-items: center; }
.hs-arrow { width: 0; height: 0; margin-left: 5px; border: 4px solid transparent; border-right: 5px solid #7a7a7a; border-left: 0; }
.hs-thumb { width: 772px; height: 11px; margin-left: 5px; background: #bdbdbd; }
```
